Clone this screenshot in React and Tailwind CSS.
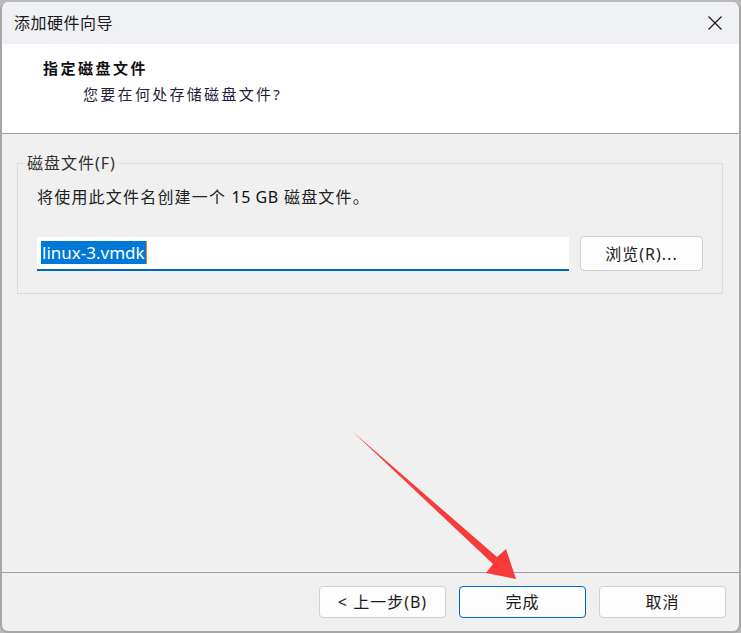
const cjk = { fontFamily: '"Noto Sans", "Noto Sans CJK SC", sans-serif' };

function WizardButton({ children, primary }) {
  return (
    <button
      className={`h-[32px] w-[127px] rounded-[4px] border bg-[#fdfdfd] text-[16px] tracking-[1px] text-[#1b1b1b] ${
        primary ? "border-[#0067c0]" : "border-[#d0d0d0]"
      }`}
    >
      {children}
    </button>
  );
}

function Arrow() {
  return (
    <svg
      className="pointer-events-none absolute left-0 top-0"
      width="741"
      height="633"
      viewBox="0 0 741 633"
    >
      <polygon
        points="353,432 497,557 506,549 516,579 486,573 493,564"
        fill="#f73a3a"
      />
    </svg>
  );
}

export default function App() {
  return (
    <div className="relative h-[633px] w-[741px] overflow-hidden bg-[#b9b9b9]" style={cjk}>
      <div className="mt-[2px] flex h-[631px] flex-col overflow-hidden rounded-[8px] border-2 border-t-0 border-[#a7a7a7] bg-[#f0f0f0]">
        {/* title bar */}
        <div className="flex h-[42px] items-center justify-between bg-[#f0f1f5] pl-[12px] pr-[16px]">
          <span className="text-[16px] tracking-[0.5px] text-[#1a1a1a]">添加硬件向导</span>
          <svg width="16" height="16" viewBox="0 0 16 16">
            <path d="M1.5 1.5 L14.5 14.5 M14.5 1.5 L1.5 14.5" stroke="#1a1a1a" strokeWidth="1.2" />
          </svg>
        </div>

        {/* header */}
        <div className="h-[90px] border-b border-[#a0a0a0] bg-white pl-[41px] pt-[12px]">
          <div className="text-[15px] font-bold leading-[24px] tracking-[2.5px] text-[#111]">
            指定磁盘文件
          </div>
          <div className="ml-[40px] mt-[2px] text-[15px] leading-[24px] tracking-[2.3px] text-[#1e1e3c]">
            您要在何处存储磁盘文件?
          </div>
        </div>

        {/* body */}
        <div className="flex-1 pt-[18px]">
          <fieldset className="ml-[15px] w-[706px] border border-[#dcdcdc] px-[19px] pb-[22px]">
            <legend className="ml-[-12px] px-[2px] text-[16px] leading-[22px] tracking-[1px] text-[#333]">
              磁盘文件(F)
            </legend>
            <div className="mt-[12px] text-[16px] leading-[22px] tracking-[1.2px] text-[#222]">
              将使用此文件名创建一个 <span className="tracking-[0.5px] text-[#111]">15 GB</span> 磁盘文件。
            </div>
            <div className="mt-[28px] flex items-center gap-[11px]">
              <div className="flex h-[34px] w-[532px] items-center border-b-2 border-[#0067c0] bg-white pl-[4px]">
                <span className="bg-[#0078d7] px-[1px] text-[17px] leading-[23px] text-white">
                  linux-3.vmdk
                </span>
                <span className="h-[23px] w-[1px] bg-[#f08020]" />
              </div>
              <button className="h-[35px] w-[123px] rounded-[4px] border border-[#d0d0d0] bg-[#fdfdfd] text-[16px] tracking-[1px] text-[#1b1b1b]">
                浏览(R)...
              </button>
            </div>
          </fieldset>
        </div>

        {/* footer */}
        <div className="flex h-[59px] items-start justify-end gap-[13px] border-t border-[#a0a0a0] pr-[13px] pt-[13px]">
          <WizardButton>&lt; 上一步(B)</WizardButton>
          <WizardButton primary>完成</WizardButton>
          <WizardButton>取消</WizardButton>
        </div>
      </div>
      <Arrow />
    </div>
  );
}
